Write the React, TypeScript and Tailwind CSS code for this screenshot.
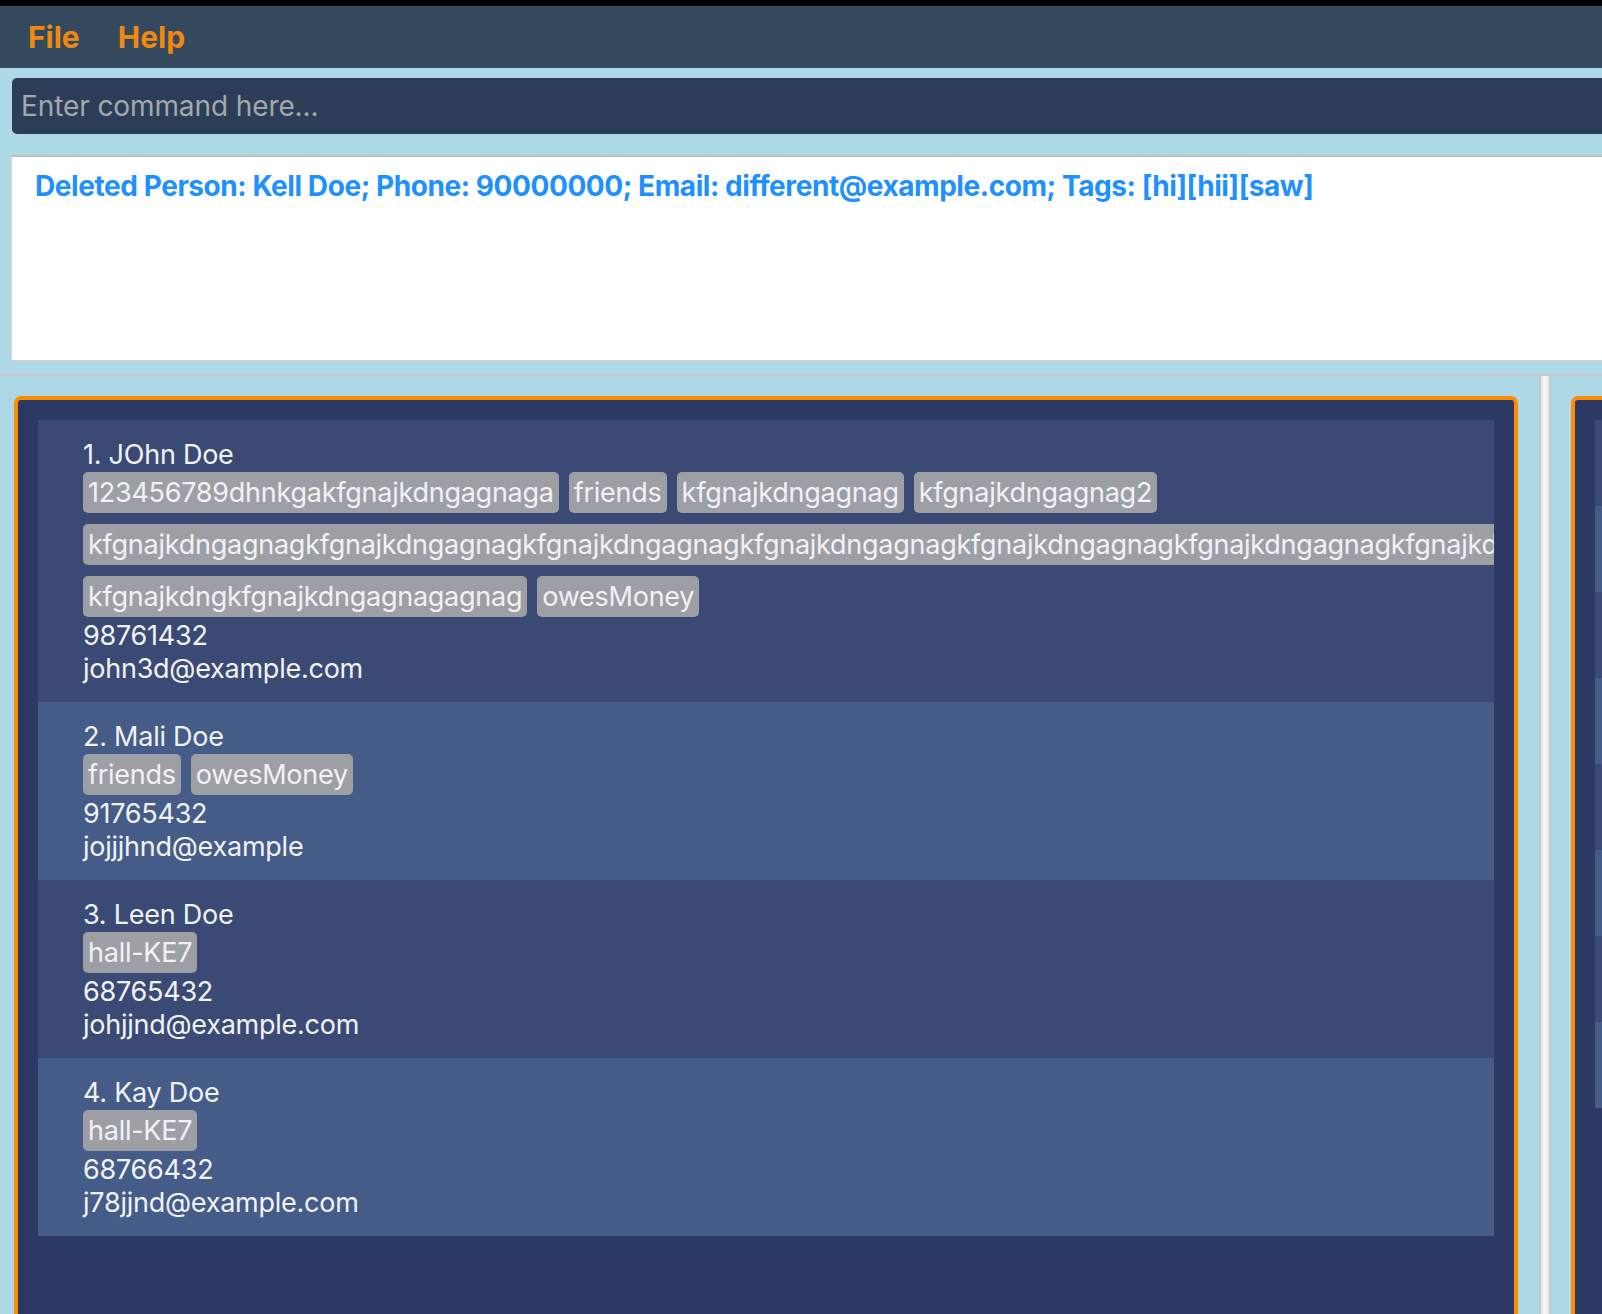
import React from 'react';

type Person = {
  name: string;
  tags: string[];
  phone: string;
  email: string;
};

const PEOPLE: Person[] = [
  {
    name: '1. JOhn Doe',
    tags: [
      '123456789dhnkgakfgnajkdngagnaga',
      'friends',
      'kfgnajkdngagnag',
      'kfgnajkdngagnag2',
      'kfgnajkdngagnagkfgnajkdngagnagkfgnajkdngagnagkfgnajkdngagnagkfgnajkdngagnagkfgnajkdngagnagkfgnajkdngagnag',
      'kfgnajkdngkfgnajkdngagnagagnag',
      'owesMoney',
    ],
    phone: '98761432',
    email: 'john3d@example.com',
  },
  { name: '2. Mali Doe', tags: ['friends', 'owesMoney'], phone: '91765432', email: 'jojjjhnd@example' },
  { name: '3. Leen Doe', tags: ['hall-KE7'], phone: '68765432', email: 'johjjnd@example.com' },
  { name: '4. Kay Doe', tags: ['hall-KE7'], phone: '68766432', email: 'j78jjnd@example.com' },
];

function PersonCard({ person, index }: { person: Person; index: number }) {
  return (
    <div
      className={`overflow-hidden pl-[45px] pt-[18px] pb-[17px] text-[27px] tracking-[-0.25px] text-[#f0f2f5] ${
        index % 2 === 0 ? 'bg-[#3b4a74]' : 'bg-[#455c88]'
      }`}
    >
      <div className="leading-[33px] whitespace-nowrap">{person.name}</div>
      <div className="mt-[1px] flex flex-wrap gap-x-[10px] gap-y-[11px]">
        {person.tags.map((tag) => (
          <span
            key={tag}
            className="shrink-0 whitespace-nowrap rounded-[5px] bg-[#9e9fa5] px-[5px] py-[4px] leading-[33px] text-[#f2f2f4]"
          >
            {tag}
          </span>
        ))}
      </div>
      <div className="mt-[2px] leading-[33px]">{person.phone}</div>
      <div className="leading-[33px]">{person.email}</div>
    </div>
  );
}

export default function App() {
  return (
    <div
      className="h-[1314px] w-[1602px] overflow-hidden bg-[#add8e6]"
      style={{ fontFamily: 'Inter, "Noto Sans", sans-serif' }}
    >
      <div className="w-[1660px]">
        {/* top strip */}
        <div className="h-[6px] bg-black" />

        {/* menu bar */}
        <div className="flex h-[62px] items-center gap-[38px] bg-[#34495e] pl-[28px] text-[30px] font-bold text-[#f0890e]">
          <span>File</span>
          <span>Help</span>
        </div>

        {/* command box */}
        <div className="pl-[12px] pt-[10px]">
          <div className="flex h-[56px] items-center rounded-[5px] bg-[#2c3e57] pl-[9px] text-[28px] tracking-[-0.1px] text-[#a3a8ae]">
            Enter command here...
          </div>
        </div>

        {/* result display */}
        <div className="pl-[11px] pt-[21px]">
          <div className="h-[207px] rounded-[3px] border-t-2 border-b-2 border-l border-t-[#bdbdbd] border-b-[#d0d0d0] border-l-[#d8d8d8] bg-white pl-[23px] pt-[8px] text-[28px] font-bold tracking-[-0.43px] text-[#1e90ff]">
            Deleted Person: Kell Doe; Phone: 90000000; Email: different@example.com; Tags: [hi][hii][saw]
          </div>
        </div>

        {/* list area */}
        <div className="mt-[12px] flex border-t-2 border-[#c8c8c8]">
          <div className="w-[1539px] pl-[14px] pr-[21px] pt-[20px]">
            <div className="h-[1000px] rounded-t-[7px] border-x-4 border-t-4 border-[#ff8c00] bg-[#2b3964] px-[20px] pt-[20px]">
              {PEOPLE.map((p, i) => (
                <PersonCard key={p.name} person={p} index={i} />
              ))}
            </div>
          </div>

          {/* splitter */}
          <div className="w-[12px] border-x-2 border-[#c8c8c8] bg-gradient-to-r from-[#e6e6e6] via-[#f6f6f6] to-[#e6e6e6]" />

          <div className="flex-1 pl-[20px] pt-[20px]">
            <div className="h-[1000px] rounded-t-[7px] border-x-4 border-t-4 border-[#ff8c00] bg-[#2b3964] px-[20px] pt-[20px]">
              {Array.from({ length: 8 }).map((_, i) => (
                <div
                  key={i}
                  className={`h-[86px] ${i % 2 === 0 ? 'bg-[#3b4a74]' : 'bg-[#455c88]'}`}
                />
              ))}
            </div>
          </div>
        </div>
      </div>
    </div>
  );
}
